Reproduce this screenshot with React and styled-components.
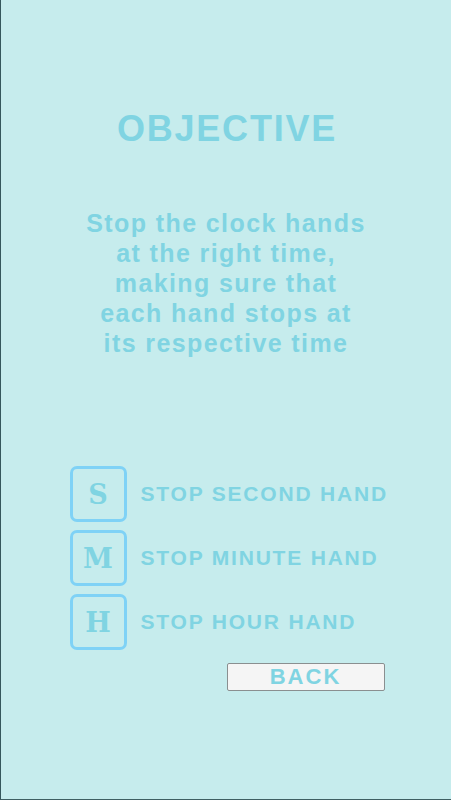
import React from 'react'
import styled, { createGlobalStyle } from 'styled-components'

const GlobalStyle = createGlobalStyle`
    html, body {
        margin: 0;
        padding: 0;
        background: #c6eced;
    }
    * {
        box-sizing: border-box;
    }
`

const controls = [
    { key: 'S', label: 'STOP SECOND HAND' },
    { key: 'M', label: 'STOP MINUTE HAND' },
    { key: 'H', label: 'STOP HOUR HAND' },
]

function App() {
    return (
        <>
            <GlobalStyle />
            <Screen>
                <Title>OBJECTIVE</Title>
                <Text>
                    Stop the clock hands<br />
                    at the right time,<br />
                    making sure that<br />
                    each hand stops at<br />
                    its respective time
                </Text>
                <Controls>
                    {controls.map((c) => (
                        <Row key={c.key}>
                            <KeyBox>{c.key}</KeyBox>
                            <Label>{c.label}</Label>
                        </Row>
                    ))}
                    <BackButton>BACK</BackButton>
                </Controls>
            </Screen>
        </>
    )
}

export default App

const Screen = styled.div`
    width: 451px;
    height: 800px;
    display: flex;
    flex-direction: column;
    align-items: center;
    padding-top: 109px;
    background: #c6eced;
    border-left: 1px solid #35575c;
    border-bottom: 1px solid #3f5f63;
    font-family: 'Liberation Sans', Arial, sans-serif;
    color: #80d4e2;
`

const Title = styled.h1`
    margin: 0;
    font-size: 36px;
    line-height: 40px;
    font-weight: 700;
    letter-spacing: 1.8px;
    padding-left: 2px;
`

const Text = styled.p`
    margin: 59px 0 0;
    font-size: 25px;
    line-height: 30px;
    font-weight: 700;
    letter-spacing: 1.4px;
    text-align: center;
`

const Controls = styled.div`
    width: 317px;
    margin: 108px 0 0 4px;
    display: flex;
    flex-direction: column;
    gap: 8px;
`

const Row = styled.div`
    display: flex;
    align-items: center;
    gap: 14px;
`

const KeyBox = styled.div`
    flex-shrink: 0;
    width: 57px;
    height: 56px;
    border: 3px solid #7fd2f6;
    border-radius: 7px;
    display: flex;
    align-items: center;
    justify-content: center;
    font-family: 'DejaVu Serif', 'Liberation Serif', serif;
    font-weight: 700;
    font-size: 27px;
    color: #80d4e2;
`

const Label = styled.span`
    font-size: 21px;
    font-weight: 700;
    letter-spacing: 1.8px;
    white-space: nowrap;
`

const BackButton = styled.button`
    align-self: flex-end;
    width: 158px;
    height: 28px;
    margin-top: 5px;
    margin-right: 2px;
    padding: 0;
    background: #f5f5f5;
    border: 1px solid #8a8f90;
    border-radius: 2px;
    font-family: 'Liberation Sans', Arial, sans-serif;
    font-size: 22px;
    font-weight: 700;
    letter-spacing: 2px;
    color: #80d4e2;
    cursor: pointer;
`
